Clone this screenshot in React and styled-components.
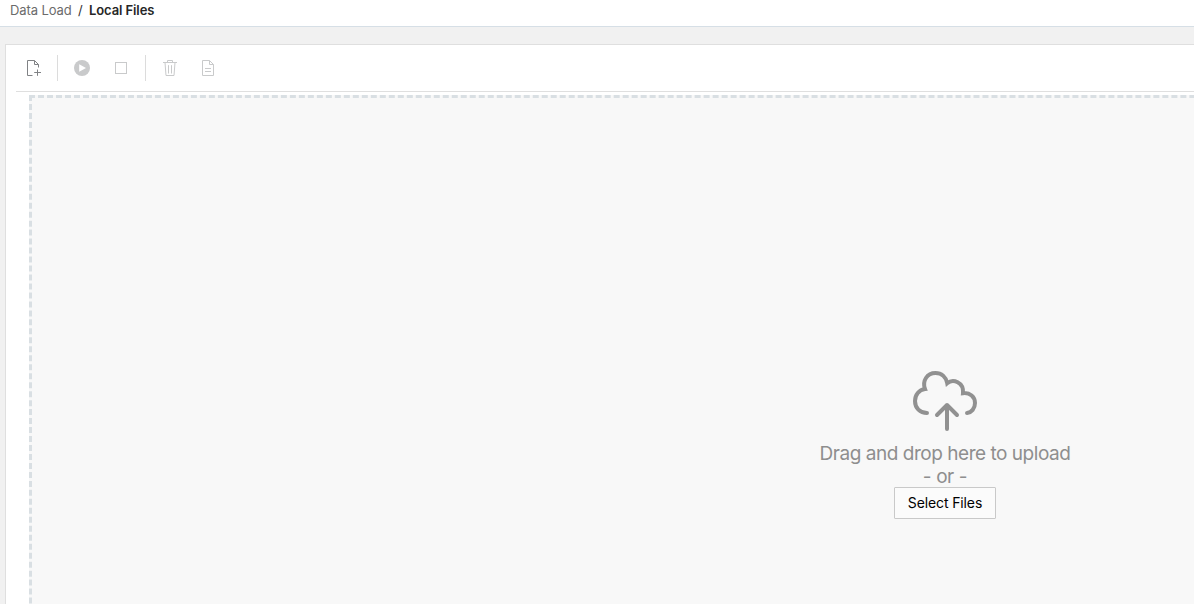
import React from "react";
import styled, { createGlobalStyle } from "styled-components";

const GlobalStyle = createGlobalStyle`
  * { box-sizing: border-box; }
  body { margin: 0; background: #f1f1f1; overflow: hidden; }
  body, button { font-family: Inter, "Liberation Sans", sans-serif; }
`;

const Page = styled.div`
  display: flex;
  flex-direction: column;
  height: 100vh;
  overflow: hidden;
`;

const Breadcrumb = styled.nav`
  flex: none;
  height: 27px;
  padding: 2px 0 0 10px;
  display: flex;
  align-items: flex-start;
  background: #fff;
  border-bottom: 1px solid #d6dfe6;
  font-size: 13px;
  line-height: 17px;
  white-space: pre;
`;

const Crumb = styled.span`
  width: ${(p) => p.$width}px;
  letter-spacing: -0.1px;
  color: ${(p) => (p.$current ? "#262626" : "#6b6b6b")};
  font-weight: ${(p) => (p.$current ? 600 : 400)};
`;

const Slash = styled.span`
  width: 17px;
  padding-left: 6px;
  color: #333;
`;

const Panel = styled.main`
  flex: 1;
  min-height: 0;
  margin: 17px 0 0 5px;
  padding-left: 10px;
  background: #fff;
  border: solid #dfdfdf;
  border-width: 1px 0 0 1px;
  overflow: hidden;
`;

const Toolbar = styled.div`
  height: 47px;
  display: flex;
  align-items: center;
  border-bottom: 1px solid #dfdfdf;
`;

const ToolGroup = styled.div`
  display: flex;
  align-items: center;
  padding-right: ${(p) => p.$end || 0}px;
`;

const Tool = styled.button`
  width: ${(p) => p.$width}px;
  height: 32px;
  padding: 0;
  border: 0;
  background: none;
  display: flex;
  align-items: center;
  justify-content: center;
  color: ${(p) => (p.disabled ? "#c9cacb" : "#808285")};

  svg { display: block; flex: none; }
`;

const Divider = styled.span`
  width: 1px;
  height: 26px;
  background: #dcdcdc;
`;

const DropZone = styled.section`
  width: 1832px;
  height: 706px;
  margin: 3px 0 0 13px;
  padding-top: 273px;
  display: flex;
  flex-direction: column;
  align-items: center;
  background: #f8f8f8;
  border: 3px dashed #d9dfe3;
`;

const Message = styled.p`
  margin: 0;
  height: ${(p) => p.$height}px;
  font-size: 19px;
  font-weight: 430;
  line-height: 24px;
  letter-spacing: ${(p) => p.$spacing}px;
  color: #8e8e8e;
`;

const SelectButton = styled.button`
  width: 102px;
  height: 32px;
  padding: 0 0 2px;
  border: 1px solid #c9c9c9;
  border-radius: 1px;
  background: #fbfbfb;
  color: #000;
  font-size: 14px;
  letter-spacing: -0.12px;
`;

const Icon = ({ children }) => (
  <svg width="16" height="16" viewBox="0 0 16 16" fill="none" stroke="currentColor">
    {children}
  </svg>
);

const NewFileIcon = () => (
  <Icon>
    <path d="M6.5 15.5H1.5V.5H8.5L12.5 4.5V7.5M8.5.5V4.5H12.5M11.5 9.5V15.8M8.2 12.5H15" />
  </Icon>
);

const PlayIcon = () => (
  <Icon>
    <circle cx="8" cy="8" r="8" fill="currentColor" stroke="none" />
    <path d="M5.2 4.2L12 8L5.2 11.8Z" fill="#fff" stroke="none" />
  </Icon>
);

const StopIcon = () => (
  <Icon>
    <rect x="2.5" y="2.5" width="11" height="11" />
  </Icon>
);

const TrashIcon = () => (
  <Icon>
    <path d="M1 2.5H15M5.5 2.5V.5H10.5V2.5M3 2.5L4 15.5H12L13 2.5M6.5 5.2V13.5M9.5 5.2V13.5" />
  </Icon>
);

const DocumentIcon = () => (
  <Icon>
    <path d="M2.5.5H9.5L13.5 4.5V15.5H2.5ZM9.5.5V4.5H13.5M5 8.5H11M5 11.5H11" />
  </Icon>
);

const CloudUploadIcon = () => (
  <svg width="64" height="71" viewBox="0 0 64 71" fill="none" stroke="#919191" strokeWidth="4" strokeLinecap="round">
    <path d="M14 42C7 42 2 37 2 30C2 24 6 18.7 12 18C9 10 14 2 22.5 2C28.5 2 33 6 34.2 12.2C40 7.3 51 11 50 22.2C57 21.4 62 26 62 32C62 37.5 58.5 41.5 54 42" />
    <path d="M34 58V34M24 44L34 34L44 44" strokeLinejoin="round" />
  </svg>
);

export default function App() {
  return (
    <Page>
      <GlobalStyle />
      <Breadcrumb aria-label="Breadcrumb">
        <Crumb $width={62}>Data Load</Crumb>
        <Slash>/</Slash>
        <Crumb $current $width={70}>Local Files</Crumb>
      </Breadcrumb>
      <Panel>
        <Toolbar>
          <ToolGroup $end={5}>
            <Tool $width={36} aria-label="Add file"><NewFileIcon /></Tool>
          </ToolGroup>
          <Divider />
          <ToolGroup $end={9}>
            <Tool disabled $width={48} aria-label="Start"><PlayIcon /></Tool>
            <Tool disabled $width={30} aria-label="Stop"><StopIcon /></Tool>
          </ToolGroup>
          <Divider />
          <ToolGroup>
            <Tool disabled $width={48} aria-label="Delete"><TrashIcon /></Tool>
            <Tool disabled $width={28} aria-label="View log"><DocumentIcon /></Tool>
          </ToolGroup>
        </Toolbar>
        <DropZone>
          <CloudUploadIcon />
          <Message $height={23} $spacing={-0.47}>Drag and drop here to upload</Message>
          <Message $height={22} $spacing={-0.4}>- or -</Message>
          <SelectButton>Select Files</SelectButton>
        </DropZone>
      </Panel>
    </Page>
  );
}
